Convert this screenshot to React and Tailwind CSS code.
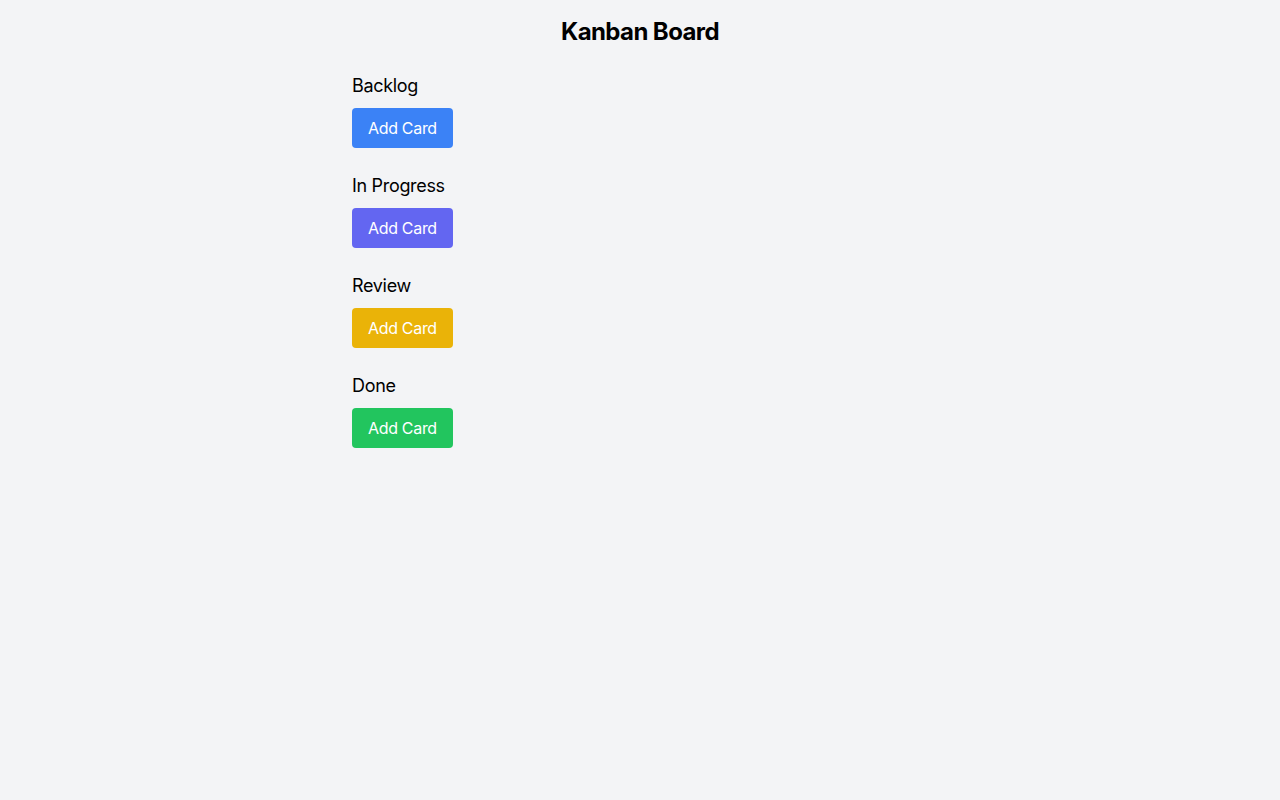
export default function App() {
  const cols = [
    { name: "Backlog", cls: "bg-[#3b82f6]" },
    { name: "In Progress", cls: "bg-[#6366f1]" },
    { name: "Review", cls: "bg-[#eab308]" },
    { name: "Done", cls: "bg-[#22c55e]" },
  ];
  return (
    <div className="min-h-screen bg-[#f3f4f6] p-4 text-black tracking-[-0.02em]" style={{ fontFamily: "Inter, 'Noto Sans', sans-serif" }}>
      <h1 className="mb-6 text-center text-2xl font-bold tracking-[-0.025em]">Kanban Board</h1>
      <div className="mx-auto flex max-w-xl flex-col gap-6">
        {cols.map((c) => (
          <div key={c.name}>
            <h2 className="mb-2 text-lg">{c.name}</h2>
            <button className={`${c.cls} rounded px-4 py-2 text-white`}>Add Card</button>
          </div>
        ))}
      </div>
    </div>
  );
}
